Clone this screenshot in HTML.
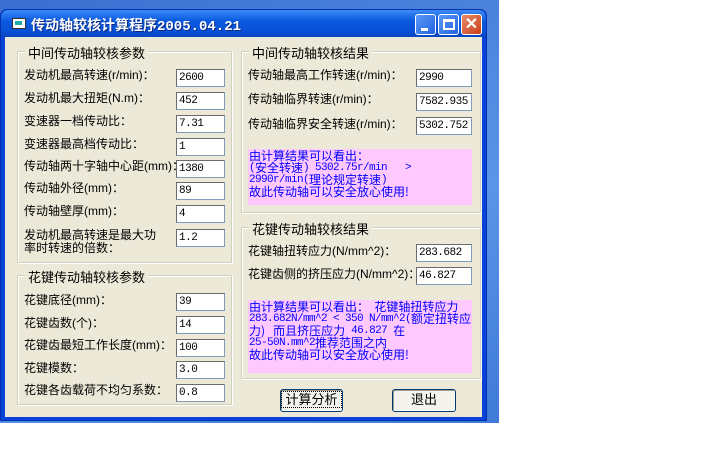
<!DOCTYPE html>
<html><head><meta charset="utf-8"><style>
*{margin:0;padding:0;box-sizing:border-box}
body{width:720px;height:450px;background:#fff;position:relative;overflow:hidden;font-family:"Liberation Sans","Noto Sans CJK SC",sans-serif;font-size:12px;color:#000}
.desk{position:absolute;left:0;top:0;width:499px;height:423px;background:linear-gradient(160deg,#3a6fd0,#5a95e8 60%,#3f7ad8)}
.win{position:absolute;left:0;top:9px;width:487px;height:412px;background:#0842d8;border-radius:7px 7px 0 0;border:1px solid #0030b0}
.title{position:absolute;left:0;top:0;width:485px;height:27px;background:linear-gradient(#3d8bf6,#0a5ae0 40%,#0850d6 80%,#0b46c0);border-radius:7px 7px 0 0}
.title .t{position:absolute;left:30px;top:5px;color:#fff;font-weight:bold;font-size:14px;font-family:"Liberation Mono","Noto Sans CJK SC",monospace;text-shadow:1px 1px #0a2a80}
.ico{position:absolute;left:11px;top:8px;width:14px;height:11px;background:#fff;border:1px solid #333}
.ico:after{content:"";position:absolute;left:2px;top:2px;width:7px;height:4px;background:#2aa}
.tb{position:absolute;top:4px;width:21px;height:21px;border:1px solid #fff;border-radius:3px;background:linear-gradient(135deg,#5a9af8,#2462e0)}
.tb.x{background:linear-gradient(135deg,#e88a6a,#c8401a)}
.client{position:absolute;left:4px;top:27px;width:477px;height:380px;background:#ece9d8}
.g{position:absolute;border:1px solid #d0d0bf;box-shadow:1px 1px 0 #fff inset,1px 1px 0 #fff}
.g .h{position:absolute;left:7px;top:-9px;background:#ece9d8;padding:0 3px;font-size:13px}
.l{position:absolute;font-size:12px;white-space:nowrap;line-height:13px}
.i{position:absolute;height:18px;background:#fff;border:1px solid #7f9db9;border-top-color:#6b6b6b;border-left-color:#6b6b6b;font-family:"Liberation Mono",monospace;font-size:11px;letter-spacing:-0.5px;padding:2px 0 0 2px;line-height:13px;overflow:hidden;white-space:nowrap}
.p{position:absolute;background:#ffc8ff;color:#0000ff;padding:1px 0 0 1px;overflow:hidden;font-family:"Liberation Mono",monospace;font-size:11px;letter-spacing:-0.6px}
.p div{height:12px;line-height:12px;white-space:pre;overflow:visible}
.p b{font-weight:normal;font-size:12px;letter-spacing:0;font-family:"Noto Sans CJK SC",sans-serif;line-height:12px;vertical-align:top;display:inline-block;height:12px}
.b{position:absolute;height:23px;background:#f4f3ee;border:1px solid #003c74;border-radius:3px;text-align:center;font-size:13px;line-height:20px;box-shadow:-1px -1px 0 #fff inset,1px 1px 0 #a09c88 inset}
</style></head><body>
<div class="desk"></div>
<div class="win">
<div class="title"><div class="ico"></div><div class="t">传动轴较核计算程序2005.04.21</div>
<div class="tb" style="left:414px"><div style="position:absolute;left:5px;top:13px;width:7px;height:3px;background:#fff"></div></div>
<div class="tb" style="left:437px"><div style="position:absolute;left:4px;top:4px;width:12px;height:11px;border:2px solid #fff;border-top-width:3px"></div></div>
<div class="tb x" style="left:460px"><div style="position:absolute;left:0;top:-1px;width:19px;text-align:center;color:#fff;font-weight:bold;font-size:16px">✕</div></div>
</div>
<div class="client">
<div class="g" style="left:12px;top:14px;width:215px;height:212px"><div class="h">中间传动轴较核参数</div></div>
<div class="g" style="left:236px;top:14px;width:240px;height:162px"><div class="h">中间传动轴较核结果</div></div>
<div class="g" style="left:236px;top:190px;width:240px;height:152px"><div class="h">花键传动轴较核结果</div></div>
<div class="g" style="left:12px;top:238px;width:215px;height:130px"><div class="h">花键传动轴较核参数</div></div>
</div>
</div>
<div class="l" style="left:24px;top:69px">发动机最高转速(r/min)：</div><div class="i" style="left:176px;top:69px;width:49px">2600</div>
<div class="l" style="left:24px;top:92px">发动机最大扭矩(N.m)：</div><div class="i" style="left:176px;top:92px;width:49px">452</div>
<div class="l" style="left:24px;top:115px">变速器一档传动比：</div><div class="i" style="left:176px;top:115px;width:49px">7.31</div>
<div class="l" style="left:24px;top:138px">变速器最高档传动比：</div><div class="i" style="left:176px;top:138px;width:49px">1</div>
<div class="l" style="left:24px;top:160px">传动轴两十字轴中心距(mm)：</div><div class="i" style="left:176px;top:160px;width:49px">1380</div>
<div class="l" style="left:24px;top:182px">传动轴外径(mm)：</div><div class="i" style="left:176px;top:182px;width:49px">89</div>
<div class="l" style="left:24px;top:205px">传动轴壁厚(mm)：</div><div class="i" style="left:176px;top:205px;width:49px">4</div>
<div class="l" style="left:24px;top:229px">发动机最高转速是最大功<br>率时转速的倍数：</div><div class="i" style="left:176px;top:229px;width:49px">1.2</div>
<div class="l" style="left:24px;top:294px">花键底径(mm)：</div><div class="i" style="left:176px;top:293px;width:49px">39</div>
<div class="l" style="left:24px;top:317px">花键齿数(个)：</div><div class="i" style="left:176px;top:316px;width:49px">14</div>
<div class="l" style="left:24px;top:339px">花键齿最短工作长度(mm)：</div><div class="i" style="left:176px;top:339px;width:49px">100</div>
<div class="l" style="left:24px;top:362px">花键模数：</div><div class="i" style="left:176px;top:361px;width:49px">3.0</div>
<div class="l" style="left:24px;top:384px">花键各齿载荷不均匀系数：</div><div class="i" style="left:176px;top:384px;width:49px">0.8</div>
<div class="l" style="left:248px;top:69px">传动轴最高工作转速(r/min)：</div><div class="i" style="left:416px;top:69px;width:56px">2990</div>
<div class="l" style="left:248px;top:93px">传动轴临界转速(r/min)：</div><div class="i" style="left:416px;top:93px;width:56px">7582.935</div>
<div class="l" style="left:248px;top:118px">传动轴临界安全转速(r/min)：</div><div class="i" style="left:416px;top:117px;width:56px">5302.752</div>
<div class="p" style="left:248px;top:149px;width:224px;height:56px">
<div><b>由计算结果可以看出：</b></div>
<div>(<b>安全转速</b>) 5302.75r/min   &gt;</div>
<div>2990r/min(<b>理论规定转速</b>)</div>
<div><b>故此传动轴可以安全放心使用!</b></div></div>
<div class="l" style="left:248px;top:245px">花键轴扭转应力(N/mm^2)：</div><div class="i" style="left:416px;top:244px;width:56px">283.682</div>
<div class="l" style="left:248px;top:268px">花键齿侧的挤压应力(N/mm^2)：</div><div class="i" style="left:416px;top:267px;width:56px">46.827</div>
<div class="p" style="left:248px;top:300px;width:224px;height:73px">
<div><b>由计算结果可以看出：  花键轴扭转应力</b></div>
<div>283.682N/mm^2 &lt; 350 N/mm^2(<b>额定扭转应</b></div>
<div><b>力)   而且挤压应力</b> 46.827 <b>在</b></div>
<div>25-50N.mm^2<b>推荐范围之内</b></div>
<div><b>故此传动轴可以安全放心使用!</b></div></div>
<div class="b" style="left:280px;top:389px;width:63px"><span style="border:1px dotted #000;padding:0 3px">计算分析</span></div>
<div class="b" style="left:392px;top:389px;width:64px">退出</div>
</body></html>
